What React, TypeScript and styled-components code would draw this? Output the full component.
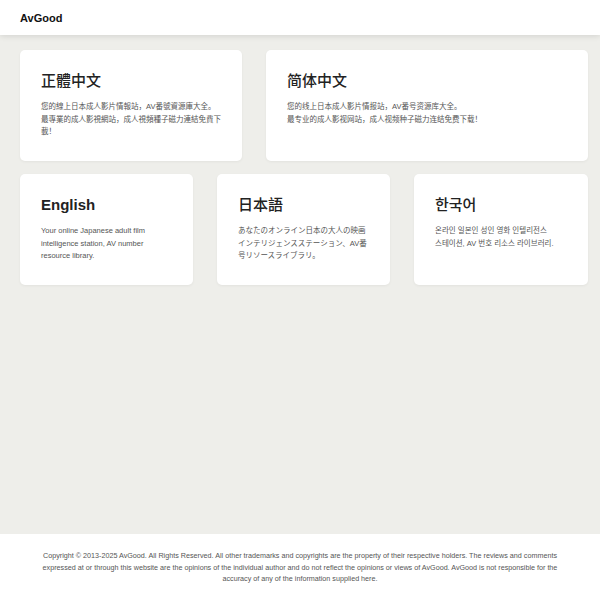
import React from "react";
import styled, { createGlobalStyle } from "styled-components";

const G = createGlobalStyle`
  html, body { margin: 0; padding: 0; background: #eeeeea; font-family: "Liberation Sans", "Noto Sans CJK SC", sans-serif; }
`;
const Page = styled.div`min-height: 600px; display: flex; flex-direction: column;`;
const Header = styled.header`
  height: 35px; background: #fff; box-shadow: 0 1px 6px rgba(0,0,0,0.12);
  display: flex; align-items: center; padding: 0 20px; font-weight: bold; font-size: 11px; color: #111;
`;
const Main = styled.main`flex: 1; padding: 15px 12px 0 20px; display: flex; flex-direction: column; gap: 13px;`;
const Row = styled.div<{ $cols: string }>`display: grid; grid-template-columns: ${p => p.$cols}; gap: 24px;`;
const Card = styled.div`
  background: #fff; border-radius: 5px; height: 111px; box-sizing: border-box; padding: 21px 21px 0 21px;
  box-shadow: 0 1px 3px rgba(0,0,0,0.05);
`;
const Title = styled.h2<{ $bold?: boolean }>`margin: 0 0 10px; font-size: 15px; font-weight: ${p => p.$bold ? 700 : 500}; color: #222; line-height: 20px;`;
const Text = styled.p`margin: 0; font-size: 7.5px; line-height: 12.5px; color: #555;`;
const Footer = styled.footer`
  background: #fff; height: 66px; box-sizing: border-box; padding: 16px 30px 0; text-align: center;
  font-size: 7.2px; line-height: 11.5px; color: #555;
`;

export default function App() {
  return (
    <Page>
      <G />
      <Header>AvGood</Header>
      <Main>
        <Row $cols="222px 322px">
          <Card>
            <Title>正體中文</Title>
            <Text>您的線上日本成人影片情報站，AV番號資源庫大全。<br />最專業的成人影視網站，成人視頻種子磁力連結免費下載！</Text>
          </Card>
          <Card>
            <Title>简体中文</Title>
            <Text>您的线上日本成人影片情报站，AV番号资源库大全。<br />最专业的成人影视网站，成人视频种子磁力连结免费下载！</Text>
          </Card>
        </Row>
        <Row $cols="173px 173px 174px">
          <Card>
            <Title $bold>English</Title>
            <Text>Your online Japanese adult film intelligence station, AV number resource library.</Text>
          </Card>
          <Card>
            <Title>日本語</Title>
            <Text>あなたのオンライン日本の大人の映画インテリジェンスステーション、AV番号リソースライブラリ。</Text>
          </Card>
          <Card>
            <Title>한국어</Title>
            <Text>온라인 일본인 성인 영화 인텔리전스<br />스테이션, AV 번호 리소스 라이브러리.</Text>
          </Card>
        </Row>
      </Main>
      <Footer>
        Copyright © 2013-2025 AvGood. All Rights Reserved. All other trademarks and copyrights are the property of their respective holders. The reviews and comments expressed at or through this website are the opinions of the individual author and do not reflect the opinions or views of AvGood. AvGood is not responsible for the accuracy of any of the information supplied here.
      </Footer>
    </Page>
  );
}
